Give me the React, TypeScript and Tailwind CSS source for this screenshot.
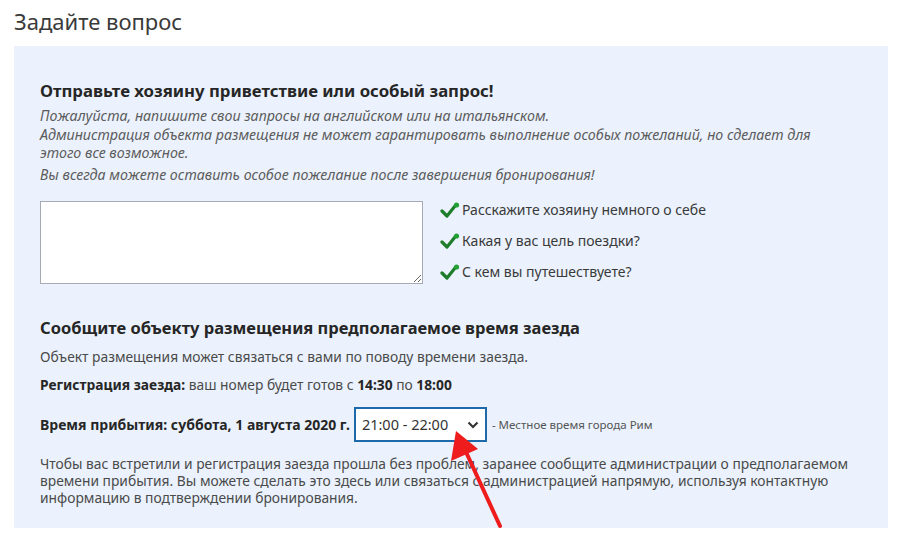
import React from "react";

const hints = [
  "Расскажите хозяину немного о себе",
  "Какая у вас цель поездки?",
  "С кем вы путешествуете?",
];

const Check: React.FC = () => (
  <svg width="20" height="16" viewBox="0 0 20 16" className="shrink-0">
    <path d="M2 9 L7 14 L15 4" stroke="#1e7d2a" strokeWidth="3.2" fill="none" strokeLinecap="round" strokeLinejoin="round" />
    <circle cx="16.5" cy="3" r="2.6" fill="#22a033" />
  </svg>
);

const App: React.FC = () => {
  return (
    <div className="relative w-[897px] h-[540px] bg-white text-[#333] overflow-hidden" style={{ fontFamily: '"Noto Sans", "Open Sans", sans-serif' }}>
      <h1 className="pl-[14px] pt-[6px] h-[46px] text-[22px] leading-[30px] text-[#3a3a3a]">Задайте вопрос</h1>

      <div className="ml-[14px] w-[874px] h-[482px] bg-[#ebf2fd] pl-[26px] pr-[28px] pt-[33px]">
        <h2 className="text-[16.75px] font-bold leading-[24px] text-[#262626]">Отправьте хозяину приветствие или особый запрос!</h2>
        <div className="mt-[3px] w-[800px] italic text-[14.25px] leading-[19px] text-[#5c5c5c]">
          <p>Пожалуйста, напишите свои запросы на английском или на итальянском.</p>
          <p className="mt-[1px] leading-[18px]">Администрация объекта размещения не может гарантировать выполнение особых пожеланий, но сделает для этого все возможное.</p>
          <p className="mt-[3px]">Вы всегда можете оставить особое пожелание после завершения бронирования!</p>
        </div>

        <div className="flex gap-[17px] mt-[17px]">
          <textarea className="w-[383px] h-[83px] bg-white border border-[#a6abb3] resize-y outline-none" />
          <ul className="-mt-[2px] flex flex-col gap-[10px] text-[14px] leading-[21px] text-[#3a3a3a]">
            {hints.map((h) => (
              <li key={h} className="flex items-center gap-[2px]">
                <Check />
                <span>{h}</span>
              </li>
            ))}
          </ul>
        </div>

        <h2 className="mt-[32px] text-[16.5px] font-bold leading-[24px] text-[#262626]">Сообщите объекту размещения предполагаемое время заезда</h2>
        <p className="mt-[7px] text-[13.8px] leading-[20px] text-[#4a4a4a]">Объект размещения может связаться с вами по поводу времени заезда.</p>
        <p className="mt-[8px] text-[13.8px] leading-[20px] text-[#4a4a4a]">
          <b className="text-[#262626]">Регистрация заезда:</b> ваш номер будет готов с <b className="text-[#262626]">14:30</b> по <b className="text-[#262626]">18:00</b>
        </p>

        <div className="flex items-center mt-[12px] h-[35px]">
          <span className="text-[14px] font-bold text-[#262626]">Время прибытия: суббота, 1 августа 2020 г.</span>
          <div className="ml-[4px] w-[133px] h-[35px] bg-white border-2 border-[#1c6aa9] flex items-center justify-between pl-[6px] pr-[6px]">
            <span className="text-[14.5px] text-[#333]">21:00 - 22:00</span>
            <svg width="12" height="8" viewBox="0 0 12 8">
              <path d="M1.5 1.5 L6 6 L10.5 1.5" stroke="#333" strokeWidth="2.2" fill="none" />
            </svg>
          </div>
          <span className="ml-[5px] text-[11.5px] text-[#555]">- Местное время города Рим</span>
        </div>

        <p className="mt-[13px] text-[13.8px] leading-[17px] text-[#4a4a4a]">
          Чтобы вас встретили и регистрация заезда прошла без проблем, заранее сообщите администрации о предполагаемом времени прибытия. Вы можете сделать это здесь или связаться с администрацией напрямую, используя контактную информацию в подтверждении бронирования.
        </p>
      </div>

      <svg className="absolute left-0 top-0 pointer-events-none" width="897" height="540">
        <line x1="500" y1="526" x2="466" y2="452" stroke="#ee1c1c" strokeWidth="4" strokeLinecap="round" />
        <polygon points="456,431 451,461 478,449" fill="#ee1c1c" />
      </svg>
    </div>
  );
};

export default App;
